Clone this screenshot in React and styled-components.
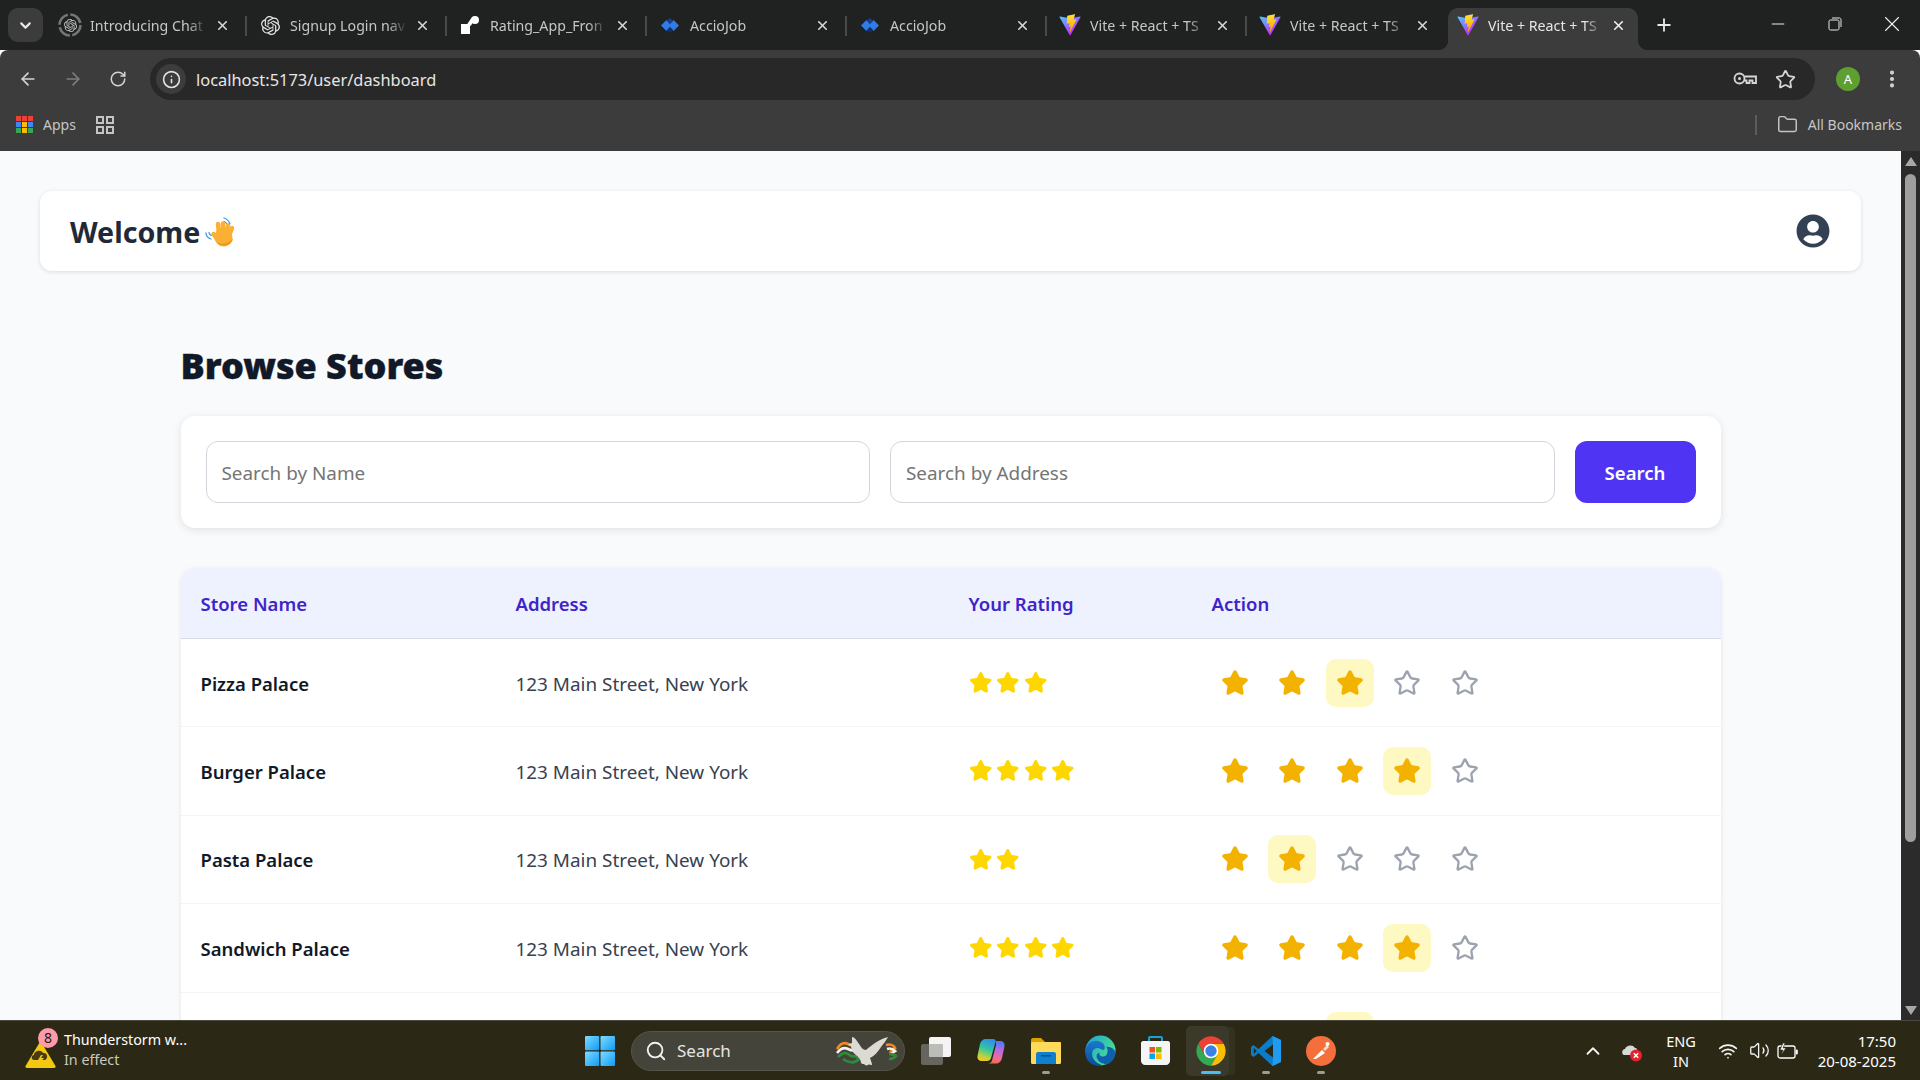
import React from "react";
import styled, { createGlobalStyle, css } from "styled-components";
import {
  ArrowLeft,
  ArrowRight,
  RotateCw,
  Info,
  Star,
  EllipsisVertical,
  Folder,
  X,
  Plus,
  ChevronDown,
  ChevronUp,
  Search as SearchGlyph,
  Minus,
  Wifi,
  Volume2,
} from "lucide-react";
import { FaUserCircle } from "react-icons/fa";
import { SiOpenai } from "react-icons/si";

const UI_FONT = `"Noto Sans", "Open Sans", sans-serif`;

const stores = [
  { name: "Pizza Palace", address: "123 Main Street, New York", rating: 3 },
  { name: "Burger Palace", address: "123 Main Street, New York", rating: 4 },
  { name: "Pasta Palace", address: "123 Main Street, New York", rating: 2 },
  { name: "Sandwich Palace", address: "123 Main Street, New York", rating: 4 },
  { name: "", address: "", rating: 3 },
];

const tabs = [
  { title: "Introducing Chat", icon: "chat" },
  { title: "Signup Login nav", icon: "openai" },
  { title: "Rating_App_Fron", icon: "repo" },
  { title: "AccioJob", icon: "accio" },
  { title: "AccioJob", icon: "accio" },
  { title: "Vite + React + TS", icon: "vite" },
  { title: "Vite + React + TS", icon: "vite" },
  { title: "Vite + React + TS", icon: "vite", active: true },
];

function ViteLogo({ size = 22 }) {
  return (
    <svg width={size} height={size} viewBox="0 0 410 404">
      <defs>
        <linearGradient id="viteA" x1="6" y1="33" x2="235" y2="344" gradientUnits="userSpaceOnUse">
          <stop stopColor="#41D1FF" />
          <stop offset="1" stopColor="#BD34FE" />
        </linearGradient>
        <linearGradient id="viteB" x1="194" y1="8" x2="236" y2="293" gradientUnits="userSpaceOnUse">
          <stop stopColor="#FFEA83" />
          <stop offset="0.08" stopColor="#FFDD35" />
          <stop offset="1" stopColor="#FFA800" />
        </linearGradient>
      </defs>
      <path
        fill="url(#viteA)"
        d="M399.641 59.5246L215.643 388.545C211.844 395.338 202.084 395.378 198.228 388.618L10.5817 59.5563C6.38087 52.1896 12.6802 43.2665 21.0281 44.7586L205.223 77.6824C206.398 77.8924 207.601 77.8904 208.776 77.6763L389.119 44.8058C397.439 43.2894 403.768 52.1434 399.641 59.5246Z"
      />
      <path
        fill="url(#viteB)"
        d="M292.965 1.5744L156.801 28.2552C154.563 28.6937 152.906 30.5903 152.771 32.8664L144.395 174.33C144.198 177.662 147.258 180.248 150.51 179.498L188.42 170.749C191.967 169.931 195.172 173.055 194.443 176.622L183.18 231.775C182.422 235.487 185.907 238.661 189.532 237.56L212.947 230.446C216.577 229.344 220.065 232.527 219.297 236.242L201.398 322.875C200.278 328.294 207.486 331.249 210.492 326.603L212.5 323.5L323.454 102.072C325.312 98.3645 322.108 94.137 318.036 94.9228L279.014 102.454C275.347 103.161 272.227 99.746 273.262 96.1583L298.731 7.86689C299.767 4.27314 296.636 0.855181 292.965 1.5744Z"
      />
    </svg>
  );
}

function AccioLogo() {
  return (
    <svg width="18" height="15" viewBox="0 0 18 15">
      <path d="M0 7.5L5.5 2l5 5.5-5 5.5z" fill="#2f7be8" />
      <path d="M7.5 7.5L12.5 2 18 7.5 12.5 13z" fill="#2f7be8" />
      <path d="M9 0l3 3-3 3-3-3z" fill="#1b3f8f" />
      <path d="M9 9l3 3-3 3-3-3z" fill="#12306e" />
    </svg>
  );
}

function RepoLogo() {
  return (
    <svg width="20" height="18" viewBox="0 0 20 18">
      <rect x="1" y="8" width="9" height="10" fill="#fff" />
      <path d="M9 9L13 3" stroke="#fff" strokeWidth="4" />
      <circle cx="15" cy="4" r="4" fill="#fff" />
    </svg>
  );
}

function ChatLogo() {
  return (
    <Ring>
      <RingArc width="24" height="24" viewBox="0 0 24 24">
        <circle cx="12" cy="12" r="10.5" fill="none" stroke="#767676" strokeWidth="2.6" strokeDasharray="14 2.5" />
      </RingArc>
      <SiOpenai size={13} color="#c9c9c9" />
    </Ring>
  );
}

function TabIcon({ kind }) {
  if (kind === "chat") return <ChatLogo />;
  if (kind === "openai") return <SiOpenai size={19} color="#e6e6e6" />;
  if (kind === "repo") return <RepoLogo />;
  if (kind === "accio") return <AccioLogo />;
  return <ViteLogo />;
}

function KeyGlyph() {
  return (
    <svg width="24" height="14" viewBox="0 0 24 14" fill="none" stroke="#d6d6d6" strokeWidth="1.8">
      <circle cx="6.5" cy="6.5" r="5" />
      <circle cx="6.5" cy="6.5" r="1.5" fill="#d6d6d6" stroke="none" />
      <path d="M11.5 4.5H23V11H19.5V8.5H16.5V11H13.5V8.5H11.5" />
    </svg>
  );
}

function WaveEmoji() {
  return (
    <svg width="30" height="30" viewBox="0 0 30 30">
      <g fill="none" stroke="#3f9ae0" strokeWidth="1.3" strokeLinecap="round">
        <path d="M19 1c3 1 5 3 6 6" />
        <path d="M19 4.5c1.5.5 2.5 1.5 3 3" />
        <path d="M1 16c0 3 2 5 5 6" />
        <path d="M4 15.5c.2 1.5 1 2.5 2.5 3" />
      </g>
      <g stroke="#fbb034" strokeWidth="4.5" strokeLinecap="round">
        <path d="M14 17L13 7" />
        <path d="M17.5 16L18 6.5" />
        <path d="M21 17L23 8.5" />
        <path d="M24 19L27 11" />
        <path d="M12 22L8.5 17" />
      </g>
      <ellipse cx="18.5" cy="20" rx="9" ry="9.5" fill="#fbb034" />
      <path d="M11 25c3 4 9 5 14 2 2-2 3-4 3-6-3 5-11 7-17 4z" fill="#f39a1e" />
    </svg>
  );
}

function WindowsLogo() {
  return (
    <svg width="30" height="30" viewBox="0 0 30 30">
      <defs>
        <linearGradient id="winA" x1="0" y1="0" x2="1" y2="1">
          <stop stopColor="#7fdcff" />
          <stop offset="1" stopColor="#0f9bf5" />
        </linearGradient>
      </defs>
      <rect x="0" y="0" width="14.2" height="14.2" fill="url(#winA)" rx="1" />
      <rect x="15.5" y="0" width="14.5" height="14.2" fill="url(#winA)" rx="1" />
      <rect x="0" y="15.5" width="14.2" height="14.5" fill="url(#winA)" rx="1" />
      <rect x="15.5" y="15.5" width="14.5" height="14.5" fill="url(#winA)" rx="1" />
    </svg>
  );
}

function Dove() {
  return (
    <svg width="62" height="30" viewBox="0 0 62 30" fill="none">
      <path d="M1 13c3-5 7-7 11-5 2 1 5 2 7 1" stroke="#f08a24" strokeWidth="2.6" />
      <path d="M1 17c4-5 7-6 11-4 2 1 5 2 7 1" stroke="#f2f2ec" strokeWidth="2.6" />
      <path d="M2 21c4-4 7-5 10-3 2 2 6 3 8 2l3 3c-3 3-6 4-9 3-3 0-5-2-7-3" stroke="#2e8b3c" strokeWidth="2.6" />
      <path d="M50 9c4-1 8 0 9 3-3 1-4 3-5 5" stroke="#f08a24" strokeWidth="2.6" />
      <path d="M51 13c3-1 6 0 8 2-2 1-3 2-4 4" stroke="#f2f2ec" strokeWidth="2.6" />
      <path d="M53 18c2 0 5 0 7 2-2 2-4 3-7 3" stroke="#2e8b3c" strokeWidth="2.6" />
      <path
        d="M16 1c3 0 5 4 7 7 2 3 4 6 7 6 6-5 13-11 22-13-2 4-5 7-7 10-3 5-7 9-11 11 1 3 2 5 2 7-2 0-3-1-4 0-2 1-3 0-4-1-1 0-2 0-3-1 0-3-2-6-5-8-3-2-5-5-5-9l-3-1c1-1 3-2 4-2z"
        fill="#dcdad2"
      />
    </svg>
  );
}

function TaskViewIcon() {
  return (
    <svg width="30" height="28" viewBox="0 0 30 28">
      <rect x="0" y="7" width="22" height="21" rx="2" fill="#66665f" />
      <rect x="8" y="0" width="22" height="20" rx="2" fill="#f4f4f4" />
      <rect x="8" y="7" width="14" height="13" rx="1" fill="#bcbcb8" />
    </svg>
  );
}

function CopilotIcon() {
  return (
    <svg width="28" height="26" viewBox="0 0 28 26">
      <defs>
        <linearGradient id="copA" x1="0.6" y1="0" x2="0.3" y2="1">
          <stop stopColor="#2f8fe8" />
          <stop offset="0.45" stopColor="#34c7a0" />
          <stop offset="0.8" stopColor="#bcd43a" />
          <stop offset="1" stopColor="#f5c430" />
        </linearGradient>
        <linearGradient id="copB" x1="0.5" y1="0" x2="0.4" y2="1">
          <stop stopColor="#4a7df0" />
          <stop offset="0.35" stopColor="#b06ae8" />
          <stop offset="0.75" stopColor="#f06a9a" />
          <stop offset="1" stopColor="#f0704a" />
        </linearGradient>
      </defs>
      <path d="M9 1h7c2 0 3 1 2.5 3L14 20c-.5 2-2 3-4 3H5c-3 0-5-2-4.5-5L3 6c.7-3 3-5 6-5z" fill="url(#copA)" />
      <path d="M18 3h5c3 0 5 2 4.5 5L25 20c-.7 3.5-3 5.5-6 5.5h-8c2 0 3.5-1 4-3L19 7c.3-1.5 0-3-1-4z" fill="url(#copB)" />
    </svg>
  );
}

function ExplorerIcon() {
  return (
    <svg width="30" height="26" viewBox="0 0 30 26">
      <path d="M0 2c0-1 .8-2 2-2h8l4 4h16v6H0z" fill="#e0a100" />
      <rect x="0" y="4" width="30" height="22" rx="1.5" fill="#ffd95a" />
      <path d="M5 16c0-1 .8-2 2-2h16c1.2 0 2 1 2 2v10H5z" fill="#0f7fd0" />
      <rect x="10" y="17" width="10" height="1.5" fill="#0a4f8a" />
    </svg>
  );
}

function EdgeIcon() {
  return (
    <svg width="31" height="31" viewBox="0 0 32 32">
      <defs>
        <linearGradient id="edgeA" x1="0" y1="0" x2="1" y2="0.6">
          <stop stopColor="#1aa3d8" />
          <stop offset="1" stopColor="#4ee08a" />
        </linearGradient>
        <linearGradient id="edgeB" x1="0" y1="0" x2="0" y2="1">
          <stop stopColor="#1b78d0" />
          <stop offset="1" stopColor="#0a4c92" />
        </linearGradient>
      </defs>
      <circle cx="16" cy="16" r="15.5" fill="url(#edgeA)" />
      <path d="M.5 16c1-7 6-10 11-10 6 0 9 4 9 7 0 2-2 3-3 2-4-3-9-2-10 3-1 7 5 12 12 13.5C11 34 -1 29 .5 16z" fill="url(#edgeB)" />
      <path d="M22 12c3 0 9 1 9.5 7-1 6-5 10-8.5 11-3 0-8-1-10-5-2-3-1-6 2-7-1 3 2 5 5 4 4-1 4-8 2-10z" fill="#0e5fae" />
    </svg>
  );
}

function StoreIcon() {
  return (
    <svg width="29" height="29" viewBox="0 0 29 29">
      <path d="M8 6V2c0-.7.5-1 1-1h11c.5 0 1 .3 1 1v4" fill="none" stroke="#18a0de" strokeWidth="2" />
      <path d="M0 7c0-1 1-2 2-2h25c1 0 2 1 2 2v18c0 2-2 4-4 4H4c-2 0-4-2-4-4z" fill="#f5f5f5" />
      <rect x="8.5" y="11" width="5.5" height="5.5" fill="#f25022" />
      <rect x="15" y="11" width="5.5" height="5.5" fill="#7fba00" />
      <rect x="8.5" y="17.5" width="5.5" height="5.5" fill="#00a4ef" />
      <rect x="15" y="17.5" width="5.5" height="5.5" fill="#ffb900" />
    </svg>
  );
}

function ChromeIcon() {
  return (
    <svg width="32" height="32" viewBox="0 0 48 48">
      <path d="M14.47 29.5L4.95 13A22 22 0 0 0 24 46L33.53 29.5Z" fill="#34a853" />
      <path d="M33.53 29.5L24 46A22 22 0 0 0 43.05 13L24 13Z" fill="#fbbc04" />
      <path d="M24 13H43.05A22 22 0 0 0 4.95 13L14.47 29.5Z" fill="#ea4335" />
      <circle cx="24" cy="24" r="11" fill="#fff" />
      <circle cx="24" cy="24" r="8.5" fill="#3b82e8" />
    </svg>
  );
}

function VsCodeIcon() {
  return (
    <svg width="30" height="30" viewBox="0 0 30 30">
      <path
        fillRule="evenodd"
        d="M21.5 0L30 4v22l-8.5 4L7.5 17 2.5 21 0 19v-8l2.5-2 5 4zM22 8.5L13.5 15 22 21.5zM2.8 12v6l3-3z"
        fill="#0b7cc9"
      />
      <path d="M21.5 0L30 4v22l-8.5 4L22 21.5V8.5z" fill="#1f9cf0" />
    </svg>
  );
}

function PostmanIcon() {
  return (
    <svg width="30" height="30" viewBox="0 0 30 30">
      <circle cx="15" cy="15" r="15" fill="#f56f3c" />
      <path d="M7 23l9-9 3 3-9 6z" fill="#fff" />
      <path d="M17 13l4-4 2 2-4 4z" fill="#ffd8c8" />
      <circle cx="21.5" cy="8" r="2" fill="#fff" />
    </svg>
  );
}

function WeatherIcon() {
  return (
    <WeatherWrap>
      <svg width="31" height="28" viewBox="0 0 31 28">
        <path d="M15.5 1L30.5 26c.3 1-.3 2-1.5 2H2c-1.2 0-1.8-1-1.5-2z" fill="#f2c811" />
        <path d="M9 20c-3 0-3-5 0-5 0-4 7-6 9-2 4-1 6 5 2 7z" fill="#4a3a12" />
        <path d="M16 15l-3 5h3l-2 4 5-6h-3l2-3z" fill="#f2c811" />
      </svg>
      <WeatherBadge>8</WeatherBadge>
    </WeatherWrap>
  );
}

function CloudError() {
  return (
    <svg width="22" height="22" viewBox="0 0 22 22">
      <path d="M3 15c-3-1-2-6 1-6 1-4 8-5 10-1 2 0 3 2 2 5l-4 2z" fill="#d8d8d4" />
      <circle cx="15" cy="15.5" r="6" fill="#e3242b" />
      <path d="M12.8 13.3l4.4 4.4m0-4.4l-4.4 4.4" stroke="#fff" strokeWidth="1.5" />
    </svg>
  );
}

function BatteryIcon() {
  return (
    <svg width="22" height="18" viewBox="0 0 22 18">
      <rect x="1" y="4" width="17" height="12" rx="2" fill="none" stroke="#fff" strokeWidth="1.3" />
      <rect x="18.8" y="7.5" width="2" height="5" rx="1" fill="#fff" />
      <path d="M6 1L3 8h3l-2 5 5-7H6l2-5z" fill="#fff" stroke="#2b2a16" strokeWidth="0.6" />
    </svg>
  );
}

function AppsGrid() {
  const colors = ["#ea4335", "#ea4335", "#ea4335", "#4285f4", "#fbbc04", "#4285f4", "#34a853", "#fbbc04", "#34a853"];
  return (
    <AppsIcon>
      {colors.map((c, i) => (
        <AppsDot key={i} $color={c} />
      ))}
    </AppsIcon>
  );
}

function TabGroups() {
  return (
    <svg width="18" height="18" viewBox="0 0 18 18" fill="none" stroke="#c4c4c4" strokeWidth="2">
      <rect x="1" y="1" width="6" height="6" />
      <rect x="11" y="1" width="6" height="6" />
      <rect x="1" y="11" width="6" height="6" />
      <rect x="11" y="11" width="6" height="6" />
    </svg>
  );
}

function RatingStars({ value }) {
  return (
    <StarRow>
      {Array.from({ length: value }).map((_, i) => (
        <Star key={i} size={23.5} fill="#ffd700" color="#ffd700" strokeWidth={2} />
      ))}
    </StarRow>
  );
}

function RatePicker({ value }) {
  return (
    <PickerRow>
      {[1, 2, 3, 4, 5].map((n) => (
        <PickerStar key={n} $selected={n === value}>
          <Star
            size={28}
            strokeWidth={2}
            color={n <= value ? "#f3b200" : "#9ca3af"}
            fill={n <= value ? "#f3b200" : "none"}
          />
        </PickerStar>
      ))}
    </PickerRow>
  );
}

export default function App() {
  return (
    <Screen>
      <GlobalStyle />
      <TabStrip>
        <TabSearch>
          <ChevronDown size={17} strokeWidth={3} color="#e8e8e8" />
        </TabSearch>
        {tabs.map((t, i) => (
          <Tab key={i} $active={t.active} $divider={!t.active && i !== 6}>
            <TabFavicon>
              <TabIcon kind={t.icon} />
            </TabFavicon>
            <TabTitle $active={t.active}>{t.title}</TabTitle>
            <TabClose>
              <X size={15} strokeWidth={2.6} color={t.active ? "#f0f0f0" : "#d6d6d6"} />
            </TabClose>
          </Tab>
        ))}
        <NewTab>
          <Plus size={20} strokeWidth={2.2} color="#e8e8e8" />
        </NewTab>
        <WindowControls>
          <WindowButton>
            <Minus size={20} strokeWidth={1.2} color="#e8e8e8" />
          </WindowButton>
          <WindowButton>
            <svg width="14" height="14" viewBox="0 0 14 14" fill="none" stroke="#e8e8e8" strokeWidth="1">
              <rect x="1" y="3" width="10" height="10" rx="1.5" />
              <path d="M4 1h7.5c1 0 1.5 1 1.5 1.5V10" />
            </svg>
          </WindowButton>
          <WindowButton>
            <X size={26} strokeWidth={1} color="#f0f0f0" />
          </WindowButton>
        </WindowControls>
      </TabStrip>

      <Toolbar>
        <NavButton>
          <ArrowLeft size={20} color="#d4d4d4" strokeWidth={2} />
        </NavButton>
        <NavButton>
          <ArrowRight size={20} color="#7e7e7e" strokeWidth={2} />
        </NavButton>
        <NavButton>
          <RotateCw size={18} color="#d4d4d4" strokeWidth={2} />
        </NavButton>
        <AddressBar>
          <SiteInfo>
            <Info size={19} color="#e3e3e3" strokeWidth={2} />
          </SiteInfo>
          <AddressText>localhost:5173/user/dashboard</AddressText>
          <AddressActions>
            <KeyGlyph />
            <Star size={21} color="#d6d6d6" strokeWidth={2} />
          </AddressActions>
        </AddressBar>
        <Avatar>A</Avatar>
        <MenuDots>
          <EllipsisVertical size={22} color="#d4d4d4" strokeWidth={2.5} />
        </MenuDots>
      </Toolbar>

      <BookmarkBar>
        <AppsGrid />
        <BookmarkLabel>Apps</BookmarkLabel>
        <GroupsButton>
          <TabGroups />
        </GroupsButton>
        <BookmarkEnd>
          <BookmarkDivider />
          <Folder size={21} color="#c4c4c4" strokeWidth={1.7} />
          <BookmarkLabel>All Bookmarks</BookmarkLabel>
        </BookmarkEnd>
      </BookmarkBar>

      <Viewport>
        <Page>
          <HeaderCard>
            <WelcomeTitle>
              Welcome
              <WaveEmoji />
            </WelcomeTitle>
            <FaUserCircle size={34} color="#334155" />
          </HeaderCard>

          <Content>
            <PageTitle>Browse Stores</PageTitle>
            <SearchCard>
              <SearchInput placeholder="Search by Name" />
              <SearchInput placeholder="Search by Address" />
              <SearchButton>Search</SearchButton>
            </SearchCard>

            <TableCard>
              <TableHead>
                <HeadCell>Store Name</HeadCell>
                <HeadCell>Address</HeadCell>
                <HeadCell>Your Rating</HeadCell>
                <HeadCell>Action</HeadCell>
              </TableHead>
              {stores.map((s, i) => (
                <TableRow key={i}>
                  <NameCell>{s.name}</NameCell>
                  <AddressCell>{s.address}</AddressCell>
                  <RatingStars value={s.rating} />
                  <RatePicker value={s.rating} />
                </TableRow>
              ))}
            </TableCard>
          </Content>
        </Page>

        <Scrollbar>
          <ScrollArrow />
          <ScrollThumb />
          <ScrollArrow $down />
        </Scrollbar>
      </Viewport>

      <Taskbar>
        <WeatherWidget>
          <WeatherIcon />
          <WeatherText>
            <WeatherTitle>Thunderstorm w...</WeatherTitle>
            <WeatherSub>In effect</WeatherSub>
          </WeatherText>
        </WeatherWidget>
        <StartButton>
          <WindowsLogo />
        </StartButton>
        <TaskSearch>
          <SearchGlyph size={22} color="#f2f2f2" strokeWidth={2} />
          <TaskSearchLabel>Search</TaskSearchLabel>
          <DoveSlot>
            <Dove />
          </DoveSlot>
        </TaskSearch>
        <TaskIcons>
          <TaskIcon>
            <TaskViewIcon />
          </TaskIcon>
          <TaskIcon>
            <CopilotIcon />
          </TaskIcon>
          <TaskIcon $running>
            <ExplorerIcon />
          </TaskIcon>
          <TaskIcon>
            <EdgeIcon />
          </TaskIcon>
          <TaskIcon>
            <StoreIcon />
          </TaskIcon>
          <TaskIcon $active>
            <ChromeIcon />
          </TaskIcon>
          <TaskIcon $running>
            <VsCodeIcon />
          </TaskIcon>
          <TaskIcon $running>
            <PostmanIcon />
          </TaskIcon>
        </TaskIcons>
        <Tray>
          <TrayItem $width={40}>
            <ChevronUp size={22} color="#f2f2f2" strokeWidth={2} />
          </TrayItem>
          <TrayItem $width={38}>
            <CloudError />
          </TrayItem>
          <TrayLang>
            <span>ENG</span>
            <span>IN</span>
          </TrayLang>
          <TrayItem $width={34}>
            <Wifi size={20} color="#f2f2f2" strokeWidth={2} />
          </TrayItem>
          <TrayItem $width={28}>
            <Volume2 size={21} color="#f2f2f2" strokeWidth={1.5} />
          </TrayItem>
          <TrayItem $width={30}>
            <BatteryIcon />
          </TrayItem>
          <Clock>
            <span>17:50</span>
            <span>20-08-2025</span>
          </Clock>
        </Tray>
      </Taskbar>
    </Screen>
  );
}

const GlobalStyle = createGlobalStyle`
  * {
    box-sizing: border-box;
  }

  html, body {
    margin: 0;
    padding: 0;
    height: 100%;
    overflow: hidden;
    font-family: ${UI_FONT};
  }
`;

const Screen = styled.div`
  width: 1920px;
  height: 1080px;
  display: flex;
  flex-direction: column;
  overflow: hidden;
`;

const TabStrip = styled.div`
  height: 50px;
  flex: none;
  display: flex;
  align-items: flex-end;
  background: #202222;
  padding-left: 8px;
`;

const TabSearch = styled.div`
  width: 35px;
  height: 34px;
  margin: 0 5px 8px 0;
  flex: none;
  display: flex;
  align-items: center;
  justify-content: center;
  border-radius: 10px;
  background: #3c3c3c;
`;

const flare = css`
  content: "";
  position: absolute;
  bottom: 0;
  width: 10px;
  height: 10px;
`;

const Tab = styled.div`
  position: relative;
  width: ${(p) => (p.$active ? "190px" : "200px")};
  height: 42px;
  flex: none;
  display: flex;
  align-items: center;
  padding: ${(p) => (p.$active ? "0 9px 8px 8px" : "0 15px 8px 10px")};
  border-radius: 10px 10px 0 0;
  background: ${(p) => (p.$active ? "#3c3c3c" : "transparent")};

  ${(p) =>
    p.$active &&
    css`
      &::before {
        ${flare};
        left: -10px;
        background: radial-gradient(circle at 0 0, transparent 10px, #3c3c3c 10.5px);
      }
      &::after {
        ${flare};
        right: -10px;
        background: radial-gradient(circle at 100% 0, transparent 10px, #3c3c3c 10.5px);
      }
    `}

  ${(p) =>
    p.$divider &&
    css`
      &::after {
        content: "";
        position: absolute;
        right: 1px;
        top: 8px;
        width: 2px;
        height: 20px;
        background: #484a4a;
      }
    `}
`;

const TabFavicon = styled.div`
  width: 24px;
  height: 24px;
  flex: none;
  display: flex;
  align-items: center;
  justify-content: center;
  margin-right: 8px;
`;

const Ring = styled.div`
  position: relative;
  width: 24px;
  height: 24px;
  display: flex;
  align-items: center;
  justify-content: center;
`;

const RingArc = styled.svg`
  position: absolute;
  inset: 0;
`;

const TabTitle = styled.div`
  flex: 1;
  min-width: 0;
  margin-right: 4px;
  white-space: nowrap;
  overflow: hidden;
  font-size: 14.2px;
  color: ${(p) => (p.$active ? "#e6e6e6" : "#c6c6c6")};
  -webkit-mask-image: linear-gradient(to right, #000 84%, transparent 100%);
  mask-image: linear-gradient(to right, #000 84%, transparent 100%);
`;

const TabClose = styled.div`
  width: 22px;
  flex: none;
  display: flex;
  justify-content: center;
`;

const NewTab = styled.div`
  width: 36px;
  height: 42px;
  margin-left: 8px;
  padding-bottom: 8px;
  flex: none;
  display: flex;
  align-items: center;
  justify-content: center;
`;

const WindowControls = styled.div`
  margin-left: auto;
  height: 50px;
  display: flex;
  align-items: center;
  padding-bottom: 2px;
`;

const WindowButton = styled.div`
  width: 57px;
  display: flex;
  justify-content: center;
`;

const Toolbar = styled.div`
  height: 50px;
  flex: none;
  display: flex;
  align-items: center;
  background: #3c3c3c;
  padding: 8px 0 0 5px;
  border-radius: 8px 8px 0 0;
`;

const NavButton = styled.div`
  width: 45px;
  height: 42px;
  flex: none;
  display: flex;
  align-items: center;
  justify-content: center;
`;

const AddressBar = styled.div`
  width: 1665px;
  height: 42px;
  margin-left: 10px;
  flex: none;
  display: flex;
  align-items: center;
  padding: 0 19px 0 6px;
  border-radius: 21px;
  background: #282828;
`;

const SiteInfo = styled.div`
  width: 30px;
  height: 30px;
  flex: none;
  display: flex;
  align-items: center;
  justify-content: center;
  border-radius: 50%;
  background: #3c3c3c;
`;

const AddressText = styled.div`
  margin-left: 10px;
  font-size: 16.4px;
  color: #e6e6e6;
`;

const AddressActions = styled.div`
  margin-left: auto;
  display: flex;
  align-items: center;
  gap: 18px;
`;

const Avatar = styled.div`
  width: 24px;
  height: 24px;
  margin-left: 21px;
  flex: none;
  display: flex;
  align-items: center;
  justify-content: center;
  border-radius: 50%;
  background: #5f9e31;
  color: #fff;
  font-size: 13px;
`;

const MenuDots = styled.div`
  margin-left: 21px;
  display: flex;
`;

const BookmarkBar = styled.div`
  height: 51px;
  flex: none;
  display: flex;
  align-items: center;
  background: #3c3c3c;
  padding: 0 18px 2px 16px;
`;

const AppsIcon = styled.div`
  width: 17px;
  height: 17px;
  display: grid;
  grid-template-columns: repeat(3, 1fr);
  gap: 1.5px;
  margin-right: 10px;
`;

const AppsDot = styled.span`
  background: ${(p) => p.$color};
`;

const BookmarkLabel = styled.span`
  font-size: 14px;
  color: #c4c7c5;
`;

const GroupsButton = styled.div`
  display: flex;
  margin-left: 20px;
`;

const BookmarkEnd = styled.div`
  margin-left: auto;
  display: flex;
  align-items: center;
  gap: 10px;
`;

const BookmarkDivider = styled.div`
  width: 2px;
  height: 20px;
  margin-right: 10px;
  background: #5c5c5c;
`;

const Viewport = styled.div`
  flex: 1;
  min-height: 0;
  display: flex;
`;

const Page = styled.main`
  flex: 1;
  min-width: 0;
  overflow: hidden;
  padding: 40px;
  background: #f9fafb;
`;

const HeaderCard = styled.header`
  height: 80px;
  display: flex;
  align-items: center;
  justify-content: space-between;
  padding: 0 31px 0 30px;
  border-radius: 12px;
  background: #fff;
  box-shadow: 0 1px 4px rgba(0, 0, 0, 0.12);
`;

const WelcomeTitle = styled.h1`
  margin: 0;
  padding-top: 1px;
  display: flex;
  align-items: center;
  gap: 5px;
  font-size: 28.6px;
  font-weight: 700;
  color: #1f2937;
`;

const Content = styled.div`
  width: 1540px;
  margin: 0 auto;
`;

const PageTitle = styled.h2`
  margin: 70px 0 0;
  padding-top: 1px;
  height: 75px;
  font-size: 36px;
  line-height: 48px;
  font-weight: 900;
  color: #111827;
  -webkit-text-stroke: 0.4px #111827;
`;

const SearchCard = styled.div`
  height: 112px;
  display: flex;
  align-items: center;
  gap: 20px;
  padding: 0 25px;
  border-radius: 14px;
  background: #fff;
  box-shadow: 0 2px 8px rgba(0, 0, 0, 0.1);
`;

const SearchInput = styled.input`
  flex: 1;
  min-width: 0;
  height: 62px;
  padding: 1px 15px 0;
  border: 1px solid #d1d5db;
  border-radius: 12px;
  background: #fff;
  outline: none;
  font-family: inherit;
  font-size: 18.9px;

  &::placeholder {
    color: #757575;
    opacity: 1;
  }
`;

const SearchButton = styled.button`
  width: 121px;
  height: 62px;
  flex: none;
  border: 0;
  border-radius: 12px;
  background: #4f35f3;
  color: #fff;
  font-family: inherit;
  font-size: 18.6px;
  font-weight: 600;
`;

const TableCard = styled.section`
  margin-top: 40px;
  border-radius: 14px 14px 0 0;
  background: #fff;
  box-shadow: 0 1px 4px rgba(0, 0, 0, 0.1);
`;

const TableHead = styled.div`
  height: 71px;
  display: grid;
  grid-template-columns: 315px 453px 243px 1fr;
  align-items: center;
  padding-left: 20px;
  border-radius: 14px 14px 0 0;
  border-bottom: 1px solid #d9dde3;
  background: #eef2ff;
`;

const HeadCell = styled.div`
  font-size: 18.5px;
  font-weight: 600;
  color: #3f24c9;
`;

const TableRow = styled.div`
  height: 88.4px;
  display: grid;
  grid-template-columns: 315px 453px 243px 1fr;
  align-items: center;
  padding-left: 20px;
  border-bottom: 1px solid #f3f4f6;
`;

const NameCell = styled.div`
  padding-top: 1px;
  font-size: 18.5px;
  font-weight: 600;
  color: #111827;
`;

const AddressCell = styled.div`
  padding-top: 2px;
  font-size: 18.9px;
  color: #374151;
`;

const StarRow = styled.div`
  display: flex;
  gap: 4px;
`;

const PickerRow = styled.div`
  display: flex;
  gap: 9.5px;
  margin-left: -1px;
`;

const PickerStar = styled.div`
  width: 48px;
  height: 48px;
  display: flex;
  align-items: center;
  justify-content: center;
  border-radius: 10px;
  background: ${(p) => (p.$selected ? "#fef9c3" : "transparent")};
`;

const Scrollbar = styled.div`
  width: 19px;
  flex: none;
  display: flex;
  flex-direction: column;
  align-items: center;
  padding: 6px 0 5px;
  background: #2b2b2b;
`;

const ScrollArrow = styled.div`
  width: 0;
  height: 0;
  border-left: 6px solid transparent;
  border-right: 6px solid transparent;
  border-bottom: ${(p) => (p.$down ? "0" : "9px solid #a8a8a8")};
  border-top: ${(p) => (p.$down ? "9px solid #a8a8a8" : "0")};
  margin-top: ${(p) => (p.$down ? "auto" : "0")};
`;

const ScrollThumb = styled.div`
  width: 11px;
  height: 668px;
  margin-top: 8px;
  border-radius: 6px;
  background: #9f9f9f;
`;

const Taskbar = styled.footer`
  height: 60px;
  flex: none;
  display: flex;
  align-items: center;
  background: #2b2916;
  border-top: 1px solid #4a4a40;
`;

const WeatherWidget = styled.div`
  width: 585px;
  flex: none;
  display: flex;
  align-items: center;
  padding-left: 25px;
`;

const WeatherWrap = styled.div`
  position: relative;
  display: flex;
  margin-top: 6px;
`;

const WeatherBadge = styled.span`
  position: absolute;
  left: 13px;
  top: -12px;
  width: 20px;
  height: 20px;
  display: flex;
  align-items: center;
  justify-content: center;
  border-radius: 50%;
  background: #ff9aa8;
  color: #1c1c1c;
  font-size: 14px;
`;

const WeatherText = styled.div`
  margin-left: 8px;
  padding-bottom: 2px;
  display: flex;
  flex-direction: column;
  line-height: 20px;
`;

const WeatherTitle = styled.span`
  font-size: 14.3px;
  color: #fff;
`;

const WeatherSub = styled.span`
  font-size: 14.3px;
  color: #c9c8bd;
`;

const StartButton = styled.div`
  width: 46px;
  flex: none;
  display: flex;
`;

const TaskSearch = styled.div`
  width: 274px;
  height: 40px;
  flex: none;
  display: flex;
  align-items: center;
  padding-left: 13px;
  border-radius: 20px;
  border: 1px solid #55544a;
  background: #45443a;
`;

const TaskSearchLabel = styled.span`
  margin-left: 10px;
  font-size: 17px;
  color: #e6e6e0;
`;

const DoveSlot = styled.div`
  margin-left: auto;
  margin-right: 6px;
  display: flex;
`;

const TaskIcons = styled.div`
  margin-left: 3px;
  display: flex;
`;

const TaskIcon = styled.div`
  position: relative;
  width: 55px;
  height: 50px;
  display: flex;
  align-items: center;
  justify-content: center;

  > svg {
    position: relative;
    z-index: 1;
  }

  ${(p) =>
    p.$active &&
    css`
      &::before {
        content: "";
        position: absolute;
        left: 3px;
        top: 0;
        width: 43px;
        height: 50px;
        border-radius: 5px;
        background: #3a392a;
        box-shadow: 7px 0 0 -1px #33321f;
      }
    `}

  &::after {
    content: "";
    display: ${(p) => (p.$active || p.$running ? "block" : "none")};
    position: absolute;
    z-index: 1;
    left: 50%;
    bottom: 2px;
    width: ${(p) => (p.$active ? "20px" : "8px")};
    height: 3px;
    transform: translateX(-50%);
    border-radius: 2px;
    background: ${(p) => (p.$active ? "#47bff5" : "#9c9c94")};
  }
`;

const Tray = styled.div`
  flex: 1;
  display: flex;
  align-items: center;
  justify-content: flex-end;
  color: #fff;
`;

const TrayItem = styled.div`
  width: ${(p) => p.$width}px;
  flex: none;
  display: flex;
  justify-content: center;
`;

const TrayLang = styled.div`
  width: 60px;
  flex: none;
  display: flex;
  flex-direction: column;
  align-items: center;
  font-size: 14.5px;
  line-height: 20px;
`;

const Clock = styled.div`
  width: 117px;
  flex: none;
  padding-right: 24px;
  display: flex;
  flex-direction: column;
  align-items: flex-end;
  font-size: 15px;
  line-height: 20px;
`;
